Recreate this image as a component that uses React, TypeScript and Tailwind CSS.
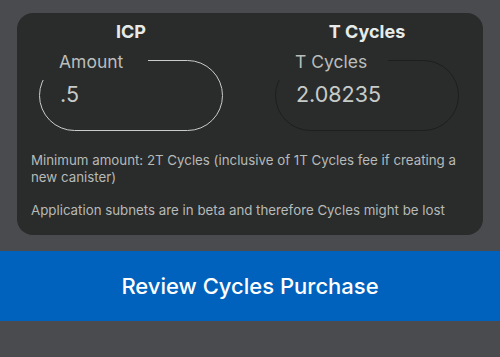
import React from 'react';

const font = { fontFamily: 'Inter, "Noto Sans", sans-serif' };

const AmountField: React.FC<{ label: string; value: string; active?: boolean; notch: number }> = ({
  label,
  value,
  active,
  notch,
}) => (
  <div className="relative h-[71px] w-[184px]">
    <div
      className={`absolute inset-0 rounded-full border ${active ? 'border-[#c9cccb]' : 'border-[#1d1e1e]'}`}
    />
    {/* notch that hides the outline behind the label */}
    <div className="absolute left-0 top-[-10px] h-[30px] bg-[#2a2b2b]" style={{ width: notch }} />
    <span className="absolute left-[20px] top-[-8px] text-[17.5px] leading-[20px] text-[#b9bebc]">{label}</span>
    <span className="absolute left-[21px] top-[21px] text-[21.5px] leading-[26px] text-[#c6cbc9]">{value}</span>
  </div>
);

export default function App() {
  return (
    <div className="h-[357px] w-[500px] overflow-hidden bg-[#4a4b4f]" style={font}>
      <div className="mx-[17px] mt-[13px] h-[222px] rounded-[16px] bg-[#2a2b2b] pt-[7px]">
        <div className="grid grid-cols-[184px_184px] gap-x-[52px] px-[22px]">
          <div className="text-center text-[18px] font-bold leading-[24px] text-[#e6ebe9]">ICP</div>
          <div className="text-center text-[18px] font-bold leading-[24px] text-[#e6ebe9]">T Cycles</div>
        </div>
        <div className="mt-[16px] grid grid-cols-[184px_184px] gap-x-[52px] px-[22px]">
          <AmountField label="Amount" value=".5" active notch={109} />
          <AmountField label="T Cycles" value="2.08235" notch={113} />
        </div>
        <div className="mt-[21px] px-[14px] text-[13.3px] leading-[17px] text-[#b6bab8]">
          <p>Minimum amount: 2T Cycles (inclusive of 1T Cycles fee if creating a new canister)</p>
          <p className="mt-[16px]">Application subnets are in beta and therefore Cycles might be lost</p>
        </div>
      </div>
      <button className="mt-[16px] flex h-[70px] w-full items-center justify-center bg-[#0062bd] text-[22px] font-medium text-white">
        Review Cycles Purchase
      </button>
    </div>
  );
}
